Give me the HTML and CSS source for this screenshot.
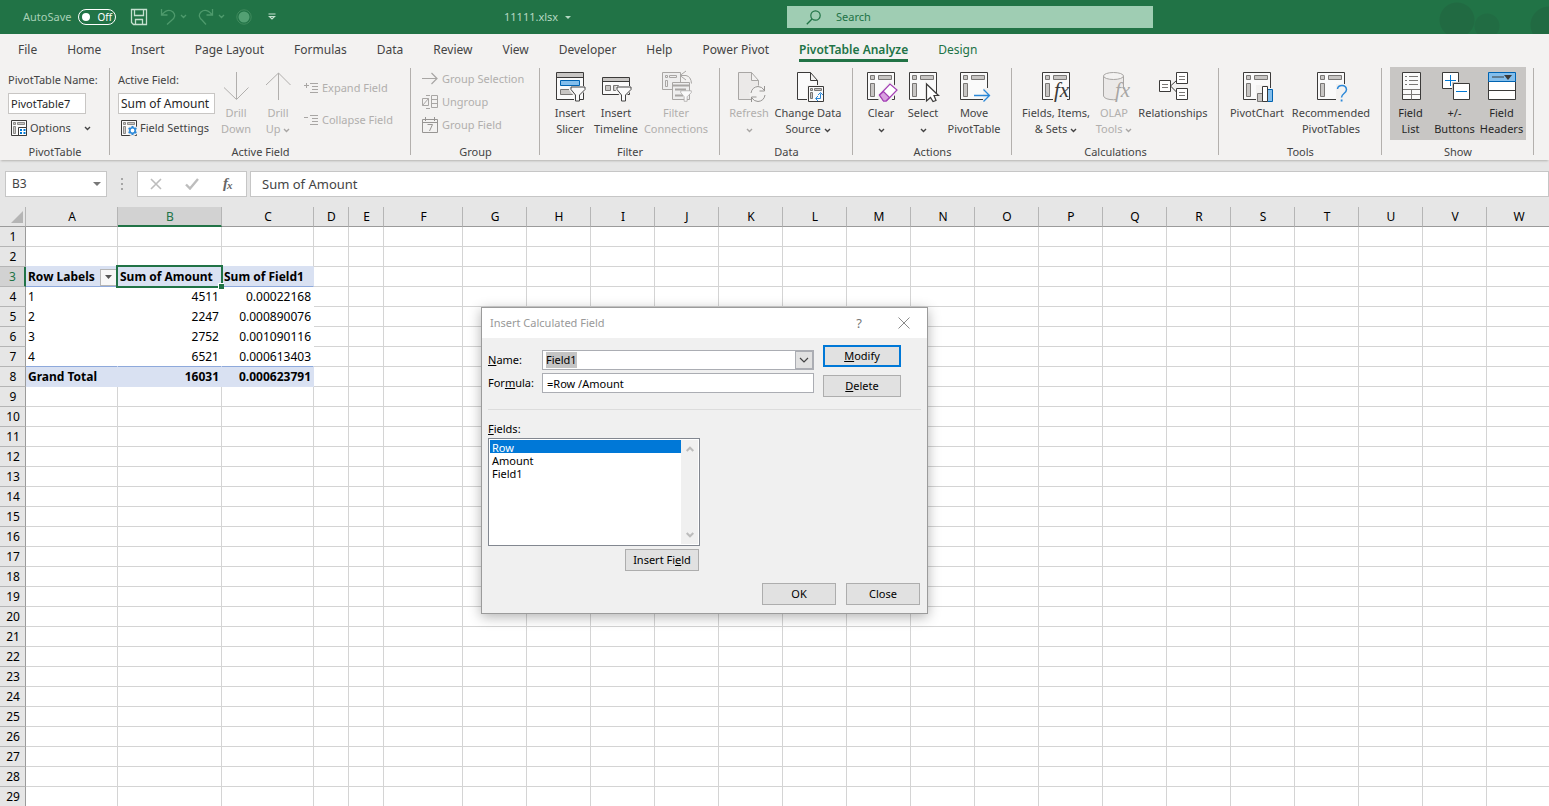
FILE: index.html
```html
<!DOCTYPE html>
<html lang="en">
<head>
<meta charset="utf-8">
<title>11111.xlsx</title>
<link rel="stylesheet" href="styles.css">
</head>
<body>
<svg class="defs" aria-hidden="true">
  <symbol id="pivot" viewBox="0 0 32 32">
    <path d="M2.500 1.500h27v27h-27z" fill="#fafafa" stroke="#3b3a39"/>
    <path d="M5.500 4.500h4v4h-4zM13.500 4.500h13v4h-13zM5.500 12.500h4v13h-4z" fill="#c8c6c4" stroke="#797775"/>
  </symbol>
  <symbol id="chev" viewBox="0 0 7 5"><path d="M1 1l2.500 2.500L6 1" fill="none" stroke="currentColor" stroke-width="1.400"/></symbol>
  <symbol id="funnel" viewBox="0 0 16 16"><path d="M1 1h14v2.500L9.500 9v6h-4V9L1 3.500z" fill="#fafafa" stroke="currentColor"/></symbol>
</svg>

<header class="titlebar">
  <div class="quick">
    <span>AutoSave</span>
    <button class="toggle" aria-label="AutoSave off"><i></i>Off</button>
    <button class="q-save" aria-label="Save"><svg width="18" height="18" viewBox="0 0 18 18"><path d="M1.500 1.500h15v15h-13l-2-2zM4.500 1.500v6h9v-6M5.500 16.500v-5h7v5" fill="none" stroke="#c5e0cf" stroke-width="1.300"/></svg></button>
    <button class="q-undo" aria-label="Undo"><svg width="27" height="18" viewBox="0 0 27 18"><path d="M1.500 1v6h6M2 6.500C6 2 10 1.500 13 4c3 3 1.500 6-1 8l-5 4.500M21 7l2.500 2.500L26 7" fill="none" stroke="#4e9a6c" stroke-width="1.300"/></svg></button>
    <button class="q-redo" aria-label="Redo"><svg width="27" height="18" viewBox="0 0 27 18"><path d="M14.500 1v6h-6M14 6.500C10 2 6 1.500 3 4c-3 3-1.500 6 1 8l4 4.500M21 7l2.500 2.500L26 7" fill="none" stroke="#4e9a6c" stroke-width="1.300"/></svg></button>
    <button class="q-dot" aria-label="Record"><svg width="16" height="16" viewBox="0 0 16 16"><circle cx="8" cy="8" r="7.200" fill="none" stroke="#3f8a5d"/><circle cx="8" cy="8" r="5.500" fill="#53a073"/></svg></button>
    <button class="q-more" aria-label="Customize toolbar"><svg width="8" height="8" viewBox="0 0 8 8"><path d="M.5 1h7M1.500 3.500L4 6l2.500-2.500z" fill="none" stroke="#c5e0cf" stroke-width="1.200"/></svg></button>
  </div>
  <button class="filename">11111.xlsx <svg width="6" height="3" viewBox="0 0 6 3"><path d="M0 0h6L3 3z" fill="#b5d8c2"/></svg></button>
  <label class="search"><svg width="15" height="15" viewBox="0 0 15 15"><circle cx="9.500" cy="5.500" r="4.700" fill="none" stroke="#217346" stroke-width="1.200"/><path d="M6 9L.8 14.200" stroke="#217346" stroke-width="1.300"/></svg><input type="text" placeholder="Search" aria-label="Search"></label>
</header>

<nav class="tabs">
  <a href="#">File</a><a href="#">Home</a><a href="#">Insert</a><a href="#">Page Layout</a><a href="#">Formulas</a><a href="#">Data</a><a href="#">Review</a><a href="#">View</a><a href="#">Developer</a><a href="#">Help</a><a href="#">Power Pivot</a><a href="#" class="active">PivotTable Analyze</a><a href="#" class="context">Design</a>
</nav>

<div class="ribbon">
  <section class="group g-pivot">
    <div class="tools">
      <div class="col">
        <label for="ptname">PivotTable Name:</label>
        <input id="ptname" class="rinput narrow" value="PivotTable7">
        <button class="small tight"><svg width="18" height="18" viewBox="0 0 18 18"><path d="M.5 1.500h15v15H.5z" fill="#fafafa" stroke="#3b3a39"/><path d="M2.500 3.500h2v2h-2zM6.500 3.500h7v2h-7zM2.500 7.500h2v7h-2z" fill="#c8c6c4" stroke="#797775" stroke-width=".8"/><path d="M7.500 8.500h8v8h-8z" fill="#fff" stroke="#3b3a39"/><path d="M9 11h2M12.500 11h2M9 14h2M12.500 14h2" stroke="#0078d4" stroke-width="1.800"/></svg>Options<svg class="ch far"><use href="#chev"/></svg></button>
      </div>
    </div>
    <h2>PivotTable</h2>
  </section>
  <section class="group g-field">
    <div class="tools">
      <div class="col">
        <label for="afield">Active Field:</label>
        <input id="afield" class="rinput" value="Sum of Amount">
        <button class="small tight"><svg width="18" height="18" viewBox="0 0 18 18"><path d="M.5 1.500h15v15H.5z" fill="#fafafa" stroke="#3b3a39"/><path d="M2.500 3.500h2v2h-2zM6.500 3.500h7v2h-7zM2.500 7.500h2v7h-2z" fill="#c8c6c4" stroke="#797775" stroke-width=".8"/><circle cx="11.500" cy="11.500" r="5.500" fill="#f3f2f1"/><circle cx="11.500" cy="11.500" r="2.700" fill="#fff" stroke="#2b88d8" stroke-width="1.600"/><path d="M11.500 7v1.500M11.500 14.500V16M7.600 9.200l1.300.8M14.100 13l1.300.8M7.600 13.800l1.300-.8M14.100 10l1.300-.8" stroke="#2b88d8" stroke-width="2"/></svg>Field Settings</button>
      </div>
      <button class="big w42 off"><svg width="32" height="32" viewBox="0 0 32 32"><path d="M16.500 1v27M4 16.500L16.500 28.500l12-12" fill="none" stroke="#b1afad"/></svg>Drill<br>Down</button>
      <button class="big w42 off"><svg width="32" height="32" viewBox="0 0 32 32"><path d="M16.500 29V2M4 14L16.500 2l12 12" fill="none" stroke="#b1afad"/></svg>Drill<br>Up <svg class="ch"><use href="#chev"/></svg></button>
      <div class="col spaced">
        <button class="small off"><svg width="14" height="12" viewBox="0 0 14 12"><path d="M0 3.500h5M2.500 1v5M6 1.500h8M8 4.500h6M8 7.500h6M6 10.500h8" stroke="#a8a6a4"/></svg>Expand Field</button>
        <button class="small off"><svg width="14" height="12" viewBox="0 0 14 12"><path d="M0 3.500h4M6 1.500h8M8 4.500h6M8 7.500h6M6 10.500h8" stroke="#a8a6a4"/></svg>Collapse Field</button>
      </div>
    </div>
    <h2>Active Field</h2>
  </section>
  <section class="group g-group">
    <div class="tools">
      <div class="col stack">
        <button class="small off"><svg width="16" height="16" viewBox="0 0 16 16"><path d="M0 7.500h15M9.500 2l5.500 5.500L9.500 13" fill="none" stroke="#a8a6a4" stroke-width="1.200"/></svg>Group Selection</button>
        <button class="small off"><svg width="16" height="16" viewBox="0 0 16 16"><path d="M.5 4.500h6v7h-6zM.5 11.500l6-7M9.500 1.500h6v12h-6zM9.500 5.500h6M9.500 9.500h6M4 1.500h4M4 14.500h4" fill="none" stroke="#a8a6a4"/></svg>Ungroup</button>
        <button class="small off"><svg width="16" height="16" viewBox="0 0 16 16"><path d="M.5 2.500h15v13H.5zM.5 5.500h15M3.500 0v4M12.500 0v4M5.500 7.500h5l-3 6.500" fill="none" stroke="#979593"/></svg>Group Field</button>
      </div>
    </div>
    <h2>Group</h2>
  </section>
  <section class="group g-filter">
    <div class="tools">
      <button class="big w44"><svg width="32" height="32" viewBox="0 0 32 32"><path d="M2.500 1.500h27v27h-27z" fill="#fafafa" stroke="#3b3a39"/><path d="M3 2h26v4H3z" fill="#c8c6c4"/><path d="M3 6.500h26" stroke="#3b3a39"/><path d="M6.500 9.500h19v5h-19z" fill="#83beec" stroke="#0063b1"/><path d="M6.500 18.500h14v5h-14z" fill="#c8c6c4" stroke="#797775"/><path d="M15 15h17v4l-6 6v6h-6v-6l-5-6z" fill="#f3f2f1"/><use href="#funnel" x="16" y="15" width="16" height="16"/></svg>Insert<br>Slicer</button>
      <button class="big w48"><svg width="32" height="32" viewBox="0 0 32 32"><path d="M2.500 6.500h27v17h-27z" fill="#fafafa" stroke="#3b3a39"/><path d="M3 7h26v3H3z" fill="#c8c6c4"/><path d="M3 10.500h26" stroke="#3b3a39"/><path d="M5.500 14.500h5v5h-5zM13.500 14.500h5v5h-5z" fill="#c8c6c4" stroke="#797775"/><path d="M15.500 15H32v4l-6 6v6h-6v-6l-4.500-6z" fill="#f3f2f1"/><use href="#funnel" x="16" y="15" width="16" height="16"/></svg>Insert<br>Timeline</button>
      <button class="big w72 off"><svg width="32" height="32" viewBox="0 0 32 32"><g fill="#eee" stroke="#a8a6a4"><path d="M2.500 1.500h18v17h-18z"/><path d="M5.500 4.500h2v2h-2zM9.500 4.500h7v2h-7zM5.500 9.500h2v6h-2z"/><path d="M12.500 11.500h17v17h-17z"/><path d="M13 14.500h16M15 18.500h11M15 24.500h8" stroke-width="2"/><path d="M26 0l-6 4.500 6 4.500M20.500 4.500H26q5 1 5.500 8" fill="none"/></g><use href="#funnel" x="20" y="19" width="12" height="12"/></svg>Filter<br>Connections</button>
    </div>
    <h2>Filter</h2>
  </section>
  <section class="group g-data">
    <div class="tools">
      <button class="big w42 off"><svg width="32" height="32" viewBox="0 0 32 32"><path d="M5.500 1.500h13l7 8v19h-20zM18.500 1.500v8h7" fill="#ebe9e8" stroke="#a8a6a4"/><circle cx="25" cy="23" r="8.500" fill="#f3f2f1"/><path d="M18 22q1-6 7-6.500 4 0 6.500 4M31.500 15v5h-5M32 24q-1 6-7 6.500-4 0-6.500-4M18.500 31v-5h5" fill="none" stroke="#979593"/></svg>Refresh<br><svg class="ch"><use href="#chev"/></svg></button>
      <button class="big w72"><svg width="32" height="32" viewBox="0 0 32 32"><path d="M5.500 1.500h13l7 8v19h-20zM18.500 1.500v8h7" fill="#fafafa" stroke="#3b3a39"/><path d="M15 14h17v17H15z" fill="#f3f2f1"/><path d="M16.500 15.500h15v15h-15z" fill="#fafafa" stroke="#3b3a39"/><path d="M18.500 17.500h2v2h-2zM22.500 17.500h7v2h-7zM18.500 21.500h2v6h-2z" fill="#c8c6c4" stroke="#797775"/><path d="M24 27.500h4.500v-5M26 24l2.500-2.500L31 24M26 25l-2.500 2.500L26 30" fill="none" stroke="#2b88d8"/></svg>Change Data<br>Source <svg class="ch"><use href="#chev"/></svg></button>
    </div>
    <h2>Data</h2>
  </section>
  <section class="group g-actions">
    <div class="tools">
      <button class="big w40"><svg width="32" height="32" viewBox="0 0 32 32"><use href="#pivot" width="32" height="32"/><path d="M12 25l13-15 9 8-8 12H14z" fill="#f3f2f1"/><path d="M14.500 24L25 13l7 6-10.500 11h-3z" fill="#fff" stroke="#a33fb5" stroke-width="1.200"/><path d="M14.500 24l4-3.500 6 6-3.500 3.500h-2.500z" fill="#d8a0df" stroke="#a33fb5" stroke-width="1.200"/></svg>Clear<br><svg class="ch"><use href="#chev"/></svg></button>
      <button class="big w40"><svg width="32" height="32" viewBox="0 0 32 32"><use href="#pivot" width="32" height="32"/><path d="M18 10v21h13v-7z" fill="#f3f2f1"/><path d="M19.500 13v17l4-3.500 2.500 4 3-1-2-5h4.500z" fill="#fff" stroke="#3b3a39" stroke-width="1.200"/></svg>Select<br><svg class="ch"><use href="#chev"/></svg></button>
      <button class="big w58"><svg width="32" height="32" viewBox="0 0 32 32"><use href="#pivot" width="32" height="32"/><path d="M25 17h6v13h-6z" fill="#f3f2f1"/><path d="M16 24.500h15.500M25.500 18.500l6 6-6 6" fill="none" stroke="#2b88d8" stroke-width="1.300"/></svg>Move<br>PivotTable</button>
    </div>
    <h2>Actions</h2>
  </section>
  <section class="group g-calc">
    <div class="tools">
      <button class="big w72"><svg width="32" height="32" viewBox="0 0 32 32"><use href="#pivot" width="32" height="32"/><path d="M13 24h14v8H13z" fill="#f3f2f1"/><text x="14" y="26" class="fx">fx</text></svg>Fields, Items,<br>&amp; Sets <svg class="ch"><use href="#chev"/></svg></button>
      <button class="big w40 off"><svg width="32" height="32" viewBox="0 0 32 32"><path d="M5.500 5v20c1 5 19 5 20 0V5" fill="#ebe9e8" stroke="#a8a6a4"/><ellipse cx="15.500" cy="5" rx="10" ry="3.500" fill="#f3f2f1" stroke="#a8a6a4"/><path d="M18 18h12v14H18z" fill="#f3f2f1"/><text x="17" y="26" class="fx dim">fx</text></svg>OLAP<br>Tools <svg class="ch"><use href="#chev"/></svg></button>
      <button class="big w74"><svg width="32" height="32" viewBox="0 0 32 32"><g fill="#fff" stroke="#3b3a39"><path d="M2.500 9.500h11v11h-11zM19.500 1.500h11v11h-11zM19.500 17.500h11v11h-11zM13.500 15l6-5.500M13.500 15l6 6"/><path d="M5 13.500h6M5 16.500h6M22 5.500h6M22 8.500h6M22 21.500h6M22 24.500h6" stroke="#797775"/></g></svg>Relationships</button>
    </div>
    <h2>Calculations</h2>
  </section>
  <section class="group g-tools">
    <div class="tools">
      <button class="big w60"><svg width="32" height="32" viewBox="0 0 32 32"><use href="#pivot" width="32" height="32"/><path d="M15 21v-7h13v3h4v15H15z" fill="#f3f2f1"/><path d="M16.500 22.500h5v8h-5z" fill="#c8c6c4" stroke="#797775"/><path d="M26.500 18.500h5v12h-5z" fill="#83beec" stroke="#0063b1"/><path d="M21.500 15.500h5v15h-5z" fill="#fff" stroke="#3b3a39"/></svg>PivotChart</button>
      <button class="big w84"><svg width="32" height="32" viewBox="0 0 32 32"><use href="#pivot" width="32" height="32"/><path d="M21 13h11v18H21z" fill="#f3f2f1"/><path d="M22.500 18q.5-3.500 4.500-3.500t4.500 4q0 2-2.500 4t-2.500 4" fill="none" stroke="#2b88d8" stroke-width="1.500"/><path d="M25.700 28.500h1.800v2h-1.800z" fill="#2b88d8"/></svg>Recommended<br>PivotTables</button>
    </div>
    <h2>Tools</h2>
  </section>
  <section class="group g-show">
    <div class="tools pressed">
      <button class="big w41"><svg width="32" height="32" viewBox="0 0 32 32"><path d="M7.500 1.500h18v27h-18z" fill="#fafafa" stroke="#3b3a39"/><path d="M10 5.500h2M14 5.500h9M10 9.500h2M14 9.500h9M10 13.500h2M14 13.500h9M8 18.500h17M8 23.500h17M16.500 18.500v10" stroke="#797775"/></svg>Field<br>List</button>
      <button class="big w47"><svg width="32" height="32" viewBox="0 0 32 32"><path d="M3.500 1.500h16v16h-16z" fill="#fff" stroke="#3b3a39"/><path d="M13 11h9v9h-9z" fill="#c8c6c4"/><path d="M14.500 12.500h16v16h-16z" fill="#fff" stroke="#3b3a39"/><path d="M11.500 4v11M6 9.500h7M13 9.500h4M17 20.500h11" stroke="#0078d4"/></svg>+/-<br>Buttons</button>
      <button class="big w47"><svg width="32" height="32" viewBox="0 0 32 32"><path d="M2.500 10.500h27v18h-27zM2.500 19.500h27" fill="#fff" stroke="#3b3a39"/><path d="M2.500 1.500h27v9h-27z" fill="#83beec" stroke="#0063b1"/><path d="M6 6h12" stroke="#3b3a39"/><path d="M18 4h8l-4 5z" fill="#3b3a39"/></svg>Field<br>Headers</button>
    </div>
    <h2>Show</h2>
  </section>
</div>

<div class="formulabar">
  <button class="namebox">B3<svg width="8" height="4" viewBox="0 0 8 4"><path d="M0 0h8L4 4z" fill="#777"/></svg></button>
  <svg class="grip" width="2" height="12" viewBox="0 0 2 12"><path d="M0 0h2v2H0zM0 5h2v2H0zM0 10h2v2H0z" fill="#a6a6a6"/></svg>
  <div class="fbuttons">
    <button aria-label="Cancel"><svg width="12" height="12" viewBox="0 0 12 12"><path d="M1 1l10 10M11 1L1 11" stroke="#bdbdbd" stroke-width="1.600"/></svg></button>
    <button aria-label="Enter"><svg width="14" height="12" viewBox="0 0 14 12"><path d="M1 6.500l4 4L13 1" fill="none" stroke="#bdbdbd" stroke-width="2.400"/></svg></button>
    <button aria-label="Insert function"><svg width="14" height="16" viewBox="0 0 14 16"><text x="2" y="12" class="fxf">f</text><text x="6" y="13" class="fxx">x</text></svg></button>
  </div>
  <input class="finput" value="Sum of Amount" aria-label="Formula bar">
</div>

<main class="sheet"><table id="grid"></table></main>

<form class="dialog" role="dialog" aria-labelledby="dlg-title">
  <div class="dlg-head">
    <span id="dlg-title">Insert Calculated Field</span>
    <button type="button" aria-label="Help">?</button>
    <button type="button" aria-label="Close dialog"><svg width="12" height="12" viewBox="0 0 12 12"><path d="M.5.5l11 11M11.500.5l-11 11" stroke="#8a8a8a"/></svg></button>
  </div>
  <div class="dlg-body">
    <div class="dlg-top">
      <div class="fields">
        <label for="fname"><u>N</u>ame:</label>
        <div class="combo"><input id="fname" value="Field1"><button type="button" aria-label="Open list"><svg width="10" height="6" viewBox="0 0 10 6"><path d="M1 1l4 4 4-4" fill="none" stroke="#444" stroke-width="1.200"/></svg></button></div>
        <label for="fform">For<u>m</u>ula:</label>
        <input id="fform" value="=Row /Amount">
      </div>
      <div class="side">
        <button type="button" class="btn primary"><span><u>M</u>odify</span></button>
        <button type="button" class="btn"><span><u>D</u>elete</span></button>
      </div>
    </div>
    <hr>
    <label for="flist" class="flabel"><u>F</u>ields:</label>
    <div class="listwrap">
      <div class="list">
        <select id="flist" size="8"><option selected>Row</option><option>Amount</option><option>Field1</option></select>
        <div class="scroll"><svg width="8" height="6" viewBox="0 0 8 6"><path d="M.7 5L4 1.700 7.300 5" fill="none" stroke="#bcbcbc" stroke-width="2"/></svg><svg width="8" height="6" viewBox="0 0 8 6"><path d="M.7 1L4 4.300 7.300 1" fill="none" stroke="#bcbcbc" stroke-width="2"/></svg></div>
      </div>
      <button type="button" class="btn"><span>Insert Fi<u>e</u>ld</span></button>
    </div>
    <div class="actions"><button type="button" class="btn">OK</button><button type="button" class="btn">Close</button></div>
  </div>
</form>
<script src="script.js"></script>
</body>
</html>
```
FILE: styles.css
```css
* { box-sizing: border-box; }
body {
  margin: 0;
  height: 100vh;
  display: flex;
  flex-direction: column;
  overflow: hidden;
  position: relative;
  background: #e6e6e6;
  color: #444;
  font: 11px/16px "Noto Sans", "Open Sans", sans-serif;
}
button, input, select { font: inherit; color: inherit; margin: 0; }
button { background: none; border: 0; padding: 0; white-space: nowrap; }
input { outline: 0; border-radius: 0; min-width: 0; }
.defs { display: none; }

/* Title bar */
.titlebar {
  flex: none;
  height: 34px;
  display: grid;
  grid-template-columns: 504px 283px minmax(200px, 366px) 1fr;
  align-items: center;
  background:
    radial-gradient(circle at calc(100% - 92px) 20px, #216a42 17px, transparent 18px),
    radial-gradient(circle at calc(100% - 62px) 26px, #216c43 12px, transparent 13px),
    radial-gradient(circle at 100% 25px, #216a42 18px, transparent 19px),
    #217346;
  color: #a6d0b5;
}
.quick { display: flex; align-items: center; padding-left: 23px; }
.quick button { display: flex; }
.quick .toggle {
  width: 38px;
  height: 16px;
  margin-left: 7px;
  border: 1px solid #fff;
  border-radius: 8px;
  align-items: center;
  gap: 7px;
  padding-left: 3px;
  color: #fff;
  font-size: 10px;
}
.toggle i { width: 8px; height: 8px; border-radius: 50%; background: #fff; }
.q-save { margin-left: 14px; }
.q-undo { margin-left: 12px; }
.q-redo { margin-left: 11px; }
.q-dot { margin-left: 11px; }
.q-more { margin-left: 16px; }
.filename { display: flex; align-items: center; gap: 7px; color: #b5d8c2; }
.search { display: flex; align-items: center; height: 22px; padding-left: 19px; gap: 15px; background: #9fcdb3; }
.search input { flex: 1; border: 0; padding: 0; background: none; }
.search input::placeholder { color: #217346; opacity: 1; }

/* Ribbon tabs */
.tabs { flex: none; display: flex; height: 33px; padding-left: 18px; gap: 30px; background: #f3f2f1; font-size: 12px; }
.tabs a { color: #444; text-decoration: none; white-space: nowrap; line-height: 31px; height: 28px; }
.tabs .active { color: #217346; font-weight: 600; border-bottom: 3px solid #217346; }
.tabs .context { color: #217346; }

/* Ribbon */
.ribbon {
  flex: none;
  display: flex;
  background: #f3f2f1;
  box-shadow: 0 2px 2px -1px #b5b3b1;
}
.group { flex: none; display: flex; flex-direction: column; position: relative; }
.group::after { content: ""; position: absolute; right: 0; top: 1px; bottom: 5px; width: 1px; background: #b3b0ad; }
.group h2 { margin: 4px 0 0; font-size: 11px; font-weight: 400; line-height: 16px; text-align: center; }
.tools { display: flex; height: 73px; margin: 0 6px 0 8px; gap: 2px; }
.g-pivot { width: 110px; }
.g-field { width: 301px; }
.g-field .tools { gap: 0; }
.g-group { width: 129px; }
.g-filter { width: 180px; }
.g-filter .tools { gap: 0; }
.g-data { width: 133px; }
.g-actions { width: 159px; }
.g-calc { width: 207px; }
.g-tools { width: 163px; }
.g-show { width: 152px; }
.tools.pressed { margin-right: 8px; background: #c8c6c4; gap: 0; color: #262626; }
.col { display: flex; flex-direction: column; align-items: flex-start; padding-top: 5px; white-space: nowrap; }
.col.spaced { padding: 13px 0 0 5px; gap: 16px; }
.col.stack { padding: 4px 0 0 3px; gap: 7px; }
.rinput { width: 97px; height: 21px; margin: 5px 0 4px; border: 1px solid #c8c6c4; padding: 0 2px; background: #fff; color: #262626; font-size: 12px; }
.rinput.narrow { width: 78px; font-size: 11px; }
.small { display: flex; align-items: center; height: 16px; gap: 4px; }
.small.tight { height: 20px; margin-left: 3px; gap: 1px; }
.big { flex: none; padding-top: 4px; text-align: center; align-self: flex-start; }
.big > svg:first-child { display: block; margin: 0 auto 2px; overflow: visible; }
.off { color: #b1afad; }
.off use { color: #a8a6a4; }
.ch { width: 7px; height: 5px; vertical-align: middle; }
.ch.far { margin-left: 12px; }
.w40 { width: 40px; }
.w41 { width: 41px; }
.w42 { width: 42px; }
.w44 { width: 44px; }
.w47 { width: 47px; }
.w48 { width: 48px; }
.w58 { width: 58px; }
.w60 { width: 60px; }
.w72 { width: 72px; }
.w74 { width: 74px; }
.w84 { width: 84px; }
.fx { font: italic 21px "Liberation Serif", serif; fill: #3b3a39; }
.fx.dim { fill: #a8a6a4; }

/* Formula bar */
.formulabar { flex: none; display: flex; align-items: center; height: 47px; padding: 1px 0 0 5px; }
.formulabar > :not(.grip) { height: 26px; background: #fff; border: 1px solid #c6c6c6; }
.namebox { width: 102px; display: flex; align-items: center; justify-content: space-between; padding: 0 5px 0 6px; font-size: 12px; }
.grip { margin: 0 14px; }
.fbuttons { width: 110px; display: flex; align-items: center; justify-content: space-around; }
.fbuttons button { display: flex; width: 20px; justify-content: center; }
.fxf { font: italic 700 15px "Liberation Serif", serif; fill: #666; }
.fxx { font: italic 700 11px "Liberation Serif", serif; fill: #666; }
.finput { flex: 1; margin-left: 3px; padding: 0 11px; font-size: 13px; }

/* Worksheet */
.sheet { flex: 1; min-height: 0; overflow: hidden; background: #fff; font: 12px/18px "Noto Sans", "Open Sans", sans-serif; color: #000; }
.sheet table { border-collapse: separate; border-spacing: 0; table-layout: fixed; width: 1550px; }
.sheet th, .sheet td { height: 20px; padding: 1px 2px 0; border: solid #d4d4d4; border-width: 0 1px 1px 0; white-space: nowrap; font-size: 12px; line-height: 18px; }
.sheet th { font-weight: 400; background: #e6e6e6; padding-left: 3px; }
.sheet thead th { border-bottom-color: #9b9b9b; border-right-color: #b5b5b5; }
.sheet tbody th { border-right-color: #9b9b9b; border-bottom-color: #b5b5b5; }
.sheet thead .sel { background: #d2d2d2; color: #217346; border-bottom: 2px solid #217346; line-height: 17px; }
.sheet tbody .sel { background: #d2d2d2; color: #217346; border-right: 2px solid #217346; }
.sheet td { text-align: right; }
.sheet td.pv { border-color: transparent; background: #fff; }
.sheet td.first { text-align: left; }
.sheet td.head, .sheet td.total { background: #d9e1f2; border-color: #d9e1f2; font-weight: 700; }
.sheet td.head { text-align: left; border-bottom-color: #8ea9db; }
.sheet td.rule { border-bottom-color: #8ea9db; }
.sheet td.above { border-bottom-color: #d9e1f2; }
.sheet .cell { display: flex; justify-content: space-between; align-items: center; height: 18px; }
.sheet .drop { flex: none; width: 17px; height: 17px; margin-right: -2px; border: 1px solid #b5b5b5; background: #f7f7f7; display: flex; align-items: center; justify-content: center; }
.sheet td.active { position: relative; }
.sheet td.active::before { content: ""; position: absolute; inset: -2px; border: 2px solid #217346; }
.sheet td.active::after { content: ""; position: absolute; right: -3px; bottom: -3px; width: 5px; height: 5px; background: #217346; border: solid #fff; border-width: 1px 0 0 1px; box-sizing: content-box; }
.corner svg { display: block; margin-left: auto; }

/* Dialog */
.dialog {
  position: absolute;
  left: 481px;
  top: 307px;
  width: 447px;
  border: 1px solid #9b9b9b;
  background: #f0f0f0;
  box-shadow: 0 3px 12px rgba(0, 0, 0, .3);
  color: #000;
}
.dlg-head { display: flex; align-items: center; height: 30px; padding: 0 8px; background: #fff; color: #999; }
.dlg-head span { flex: 1; }
.dlg-head button { width: 30px; display: flex; justify-content: center; font-size: 13px; color: #777; }
.dlg-head button + button { margin-left: 15px; }
.dlg-body { padding: 7px 6px 8px; }
.dlg-top { display: flex; gap: 9px; }
.fields { width: 326px; display: grid; grid-template-columns: 54px 1fr; row-gap: 3px; padding-top: 5px; align-content: start; align-items: center; }
.fields > input, .combo { height: 20px; border: 1px solid #abadb3; background: #fff; }
.fields > input { padding: 0 4px; width: 100%; }
.combo { display: flex; }
.combo input { flex: 1; border: 0; padding: 0 3px; background: none; }
.combo input::selection { background: #c4c4c4; color: #000; }
.combo button { width: 18px; border: 1px solid #abadb3; background: #e1e1e1; display: flex; align-items: center; justify-content: center; }
.side { width: 78px; display: flex; flex-direction: column; gap: 8px; }
.btn { height: 22px; background: #e1e1e1; border: 1px solid #adadad; }
.primary { border: 2px solid #0078d7; }
.dialog hr { margin: 12px 0 11px; border: 0; border-top: 1px solid #dcdcdc; }
.flabel { display: block; margin-bottom: 1px; }
.listwrap { width: 212px; display: flex; flex-direction: column; align-items: flex-end; gap: 3px; }
.list { width: 100%; height: 108px; border: 1px solid #828790; background: #fff; padding: 1px; display: flex; }
.list select { flex: 1; height: 100%; border: 0; outline: 0; padding: 0; overflow: hidden; background: #fff; border-radius: 0; }
.list option { padding: 0 2px; min-height: 13px; line-height: 11px; height: 13px; }
.list option:checked { background: linear-gradient(#0078d7, #0078d7); color: #fff; -webkit-text-fill-color: #fff; }
.scroll { width: 17px; background: #f0f0f0; display: flex; flex-direction: column; justify-content: space-between; align-items: center; padding: 6px 0; }
.listwrap .btn, .actions .btn { width: 74px; }
.listwrap .btn { margin-right: 1px; }
.actions { display: flex; justify-content: flex-end; gap: 10px; margin: 12px 1px 0 0; }
```
FILE: script.js
```js
const widths = [92, 104, 92, 35, 35, 79].concat(Array(17).fill(64));
const data = {
  3: ["Row Labels", "Sum of Amount", "Sum of Field1"],
  4: ["1", "4511", "0.00022168"],
  5: ["2", "2247", "0.000890076"],
  6: ["3", "2752", "0.001090116"],
  7: ["4", "6521", "0.000613403"],
  8: ["Grand Total", "16031", "0.000623791"]
};
let html = '<colgroup><col style="width:26px">' + widths.map(w => `<col style="width:${w}px">`).join("") + "</colgroup>";
html += '<thead><tr><th class="corner"><svg width="12" height="12" viewBox="0 0 12 12"><path d="M12 0v12H0z" fill="#b5b5b5"/></svg></th>';
widths.forEach((w, i) => { html += `<th class="${i === 1 ? "sel" : ""}">${String.fromCharCode(65 + i)}</th>`; });
html += "</tr></thead><tbody>";
for (let r = 1; r <= 29; r++) {
  html += `<tr><th class="${r === 3 ? "sel" : ""}">${r}</th>`;
  for (let c = 0; c < widths.length; c++) {
    const names = [];
    let text = "";
    if (c < 3 && data[r]) {
      text = data[r][c];
      names.push("pv");
      if (c === 0) names.push("first");
      if (r === 3) names.push("head");
      if (r === 8) names.push("total");
      if (r === 7) names.push("rule");
      if (r === 3 && c === 1) names.push("active");
      if (r === 3 && c === 0) text = `<div class="cell">${text}<button class="drop" aria-label="Filter row labels"><svg width="7" height="4" viewBox="0 0 7 4"><path d="M0 0h7L3.500 4z" fill="#555"/></svg></button></div>`;
    } else if (c < 3 && r === 2) names.push("above");
    html += `<td class="${names.join(" ")}">${text}</td>`;
  }
  html += "</tr>";
}
document.getElementById("grid").innerHTML = html + "</tbody>";
const field = document.getElementById("fname");
field.focus();
field.select();
```
